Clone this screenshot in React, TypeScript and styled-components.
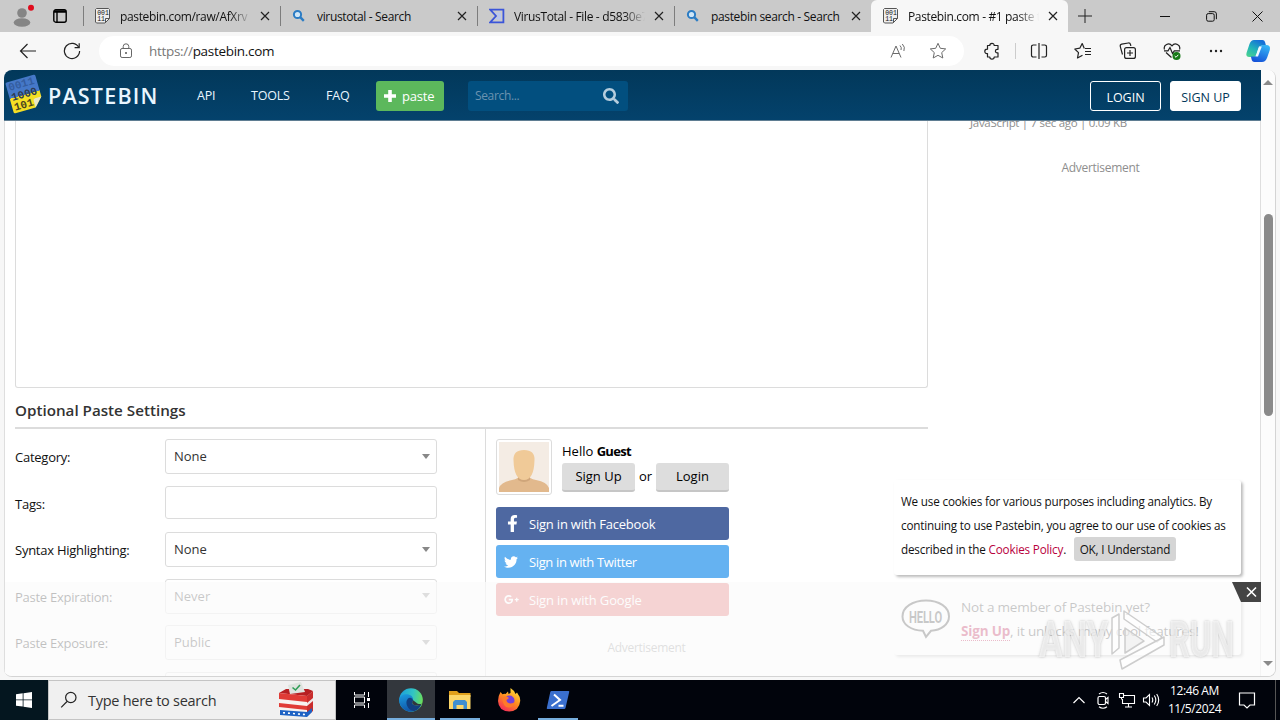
import React from 'react'
import styled, { createGlobalStyle, css } from 'styled-components'
import { FaSearch, FaFacebookF, FaTwitter, FaGooglePlusG } from 'react-icons/fa'

const font = `'Open Sans', 'Noto Sans', sans-serif`

const color = {
  tabBar: '#cacaca',
  toolbar: '#f7f7f7',
  border: '#dcdcdc',
  text: '#111',
  muted: '#8e8e8e',
  link: '#b8003c',
  green: '#5cb85c',
  facebook: '#4e68a1',
  twitter: '#65b2f1',
  google: '#e25b5b',
}

const tabs = [
  { icon: 'paste', title: 'pastebin.com/raw/AfXrv', fade: true },
  { icon: 'search', title: 'virustotal - Search' },
  { icon: 'virus', title: 'VirusTotal - File - d5830e7', fade: true },
  { icon: 'search', title: 'pastebin search - Search' },
  { icon: 'paste', title: 'Pastebin.com - #1 paste t', fade: true, active: true },
]

const fields = [
  { label: 'Category:', value: 'None', select: true },
  { label: 'Tags:', value: '' },
  { label: 'Syntax Highlighting:', value: 'None', select: true },
  { label: 'Paste Expiration:', value: 'Never', select: true },
  { label: 'Paste Exposure:', value: 'Public', select: true },
  { label: '', value: '' },
]

const Svg = ({ w = 16, h = w, box = `0 0 ${w} ${h}`, children }: any) => (
  <Icon width={w} height={h} viewBox={box}>
    {children}
  </Icon>
)

const TabIcon = ({ name }: { name: string }) => {
  if (name === 'search') {
    return (
      <Svg w={14}>
        <circle cx="5.5" cy="5.5" r="3.6" fill="#cfe6f7" stroke="#2b7cc4" strokeWidth="2" />
        <path d="M8.2 8.2l3.6 3.6" stroke="#2b7cc4" strokeWidth="2.4" />
      </Svg>
    )
  }
  if (name === 'virus') {
    return (
      <Svg w={16}>
        <path d="M1.2 1.7h13.2v12.6H1.2L7 8z" stroke="#3b55d9" strokeWidth="1.8" />
        <path d="M6 4.5h6v7H6L9.200 8z" fill="#b9c6ee" />
      </Svg>
    )
  }
  return (
    <Svg w={16}>
      <path d="M1.5.5h12l1 1v9l-4.500 4.500h-8.500l-1-1v-12.500z" fill="#eee" stroke="#555" />
      <path d="M14.500 10.500h-4V15" stroke="#555" />
      <g fontSize="6.500" fontFamily="Liberation Mono, monospace" fill="#111">
        <text x="2.200" y="6.800">001</text>
        <text x="2.200" y="13">11</text>
      </g>
    </Svg>
  )
}

const CloseIcon = () => (
  <Svg w={10}>
    <path d="M1 1l8 8M9 1L1 9" stroke="#222" strokeWidth="1.2" />
  </Svg>
)

const TabStrip = () => (
  <TabBar>
    <Profile>
      <Svg w={24} h={28}>
        <circle cx="12" cy="11" r="4.800" fill="#858585" />
        <ellipse cx="12" cy="20.500" rx="8.300" ry="4.300" fill="#858585" />
        <circle cx="21" cy="5.700" r="3" fill="#e00b1c" />
      </Svg>
      <Svg w={14}>
        <rect x="0.800" y="0.800" width="12.400" height="12.400" rx="2" stroke="#000" strokeWidth="1.400" />
        <path d="M1 2.500h12" stroke="#000" strokeWidth="2.500" />
        <path d="M4 3v10" stroke="#000" strokeWidth="1.400" />
      </Svg>
    </Profile>
    {tabs.map(tab => (
      <Tab key={tab.title} $active={tab.active}>
        <TabIconBox><TabIcon name={tab.icon} /></TabIconBox>
        <TabTitle $fade={tab.fade}>{tab.title}</TabTitle>
        <CloseIcon />
      </Tab>
    ))}
    <NewTab>
      <Svg w={14}><path d="M7 0v14M0 7h14" stroke="#222" /></Svg>
    </NewTab>
    <WindowButtons>
      <WindowButton><Svg w={10}><path d="M0 5.500h10" stroke="#111" /></Svg></WindowButton>
      <WindowButton>
        <Svg w={11}>
          <rect x="0.600" y="2.600" width="7.600" height="7.600" rx="1.600" stroke="#111" />
          <path d="M2.800 0.700h5.400a2.200 2.200 0 0 1 2.200 2.200v5.300" stroke="#111" />
        </Svg>
      </WindowButton>
      <WindowButton><Svg w={11}><path d="M0.500 0.500l10 10M10.500 0.500l-10 10" stroke="#111" /></Svg></WindowButton>
    </WindowButtons>
  </TabBar>
)

const AddressBar = () => (
  <Toolbar>
    <ToolCell $w={55}>
      <Svg w={18}><path d="M17 9H1.500M8.500 2L1.500 9l7 7" stroke="#222" strokeWidth="1.200" /></Svg>
    </ToolCell>
    <ToolCell $w={33}>
      <Svg w={18}>
        <path d="M15.800 5.500A7.600 7.600 0 1 0 16.600 9" stroke="#222" strokeWidth="1.200" />
        <path d="M16.200 1.200v4.500h-4.600" stroke="#222" strokeWidth="1.200" />
      </Svg>
    </ToolCell>
    <Address>
      <Svg w={14} h={16}>
        <rect x="1.500" y="5.500" width="11" height="9" rx="1.600" stroke="#666" />
        <path d="M4.200 5.500V3.600a2.800 2.800 0 0 1 5.600 0v1.900" stroke="#666" />
        <circle cx="7" cy="10" r="1" fill="#555" />
      </Svg>
      <Url><span>https://</span>pastebin.com</Url>
      <Svg w={17} h={16}>
        <path d="M1 14.500L6 3l5 11.500M2.800 10.500h6.400M10 2.500q2 2 1 4.500M12.300 1q3.200 3 1.600 7" stroke="#6b6b6b" />
      </Svg>
      <Svg w={18}>
        <path d="M9 1.300l2.300 5 5.400.6-4 3.700 1.100 5.400L9 13.300 4.200 16l1.100-5.400-4-3.700 5.400-.6z" stroke="#6b6b6b" strokeLinejoin="round" />
      </Svg>
    </Address>
    <ToolCell $w={50} $shift={5}>
      <Svg w={18}>
        <path d="M4.500 3.500h2.300a2.200 2.200 0 0 1 4.400 0h3.800v3.800h-.8a1.800 1.800 0 1 0 0 3.600h.8v4.100h-3.800a2.200 2.200 0 0 1-4.400 0H4.500v-3.400H4a2.200 2.200 0 0 1 0-4.400h.5z" stroke="#222" strokeWidth="1.200" strokeLinejoin="round" />
      </Svg>
    </ToolCell>
    <ToolDivider />
    <ToolCell>
      <Svg w={18}>
        <path d="M6.500 3H3.200a1.700 1.700 0 0 0-1.700 1.700v8.600A1.700 1.700 0 0 0 3.200 15h3.300M11.500 3h3.300a1.700 1.700 0 0 1 1.700 1.700v8.600a1.700 1.700 0 0 1-1.700 1.700h-3.300M9 1v16" stroke="#222" strokeWidth="1.200" />
      </Svg>
    </ToolCell>
    <ToolCell>
      <Svg w={18}>
        <path d="M10.300 6.500L8.200 1.500 5.800 6.200.8 7l3.700 3.600L3.500 16l5-2.800M11 6.500h6M11 9.500h6M11 12.500h6" stroke="#222" strokeWidth="1.200" strokeLinejoin="round" />
      </Svg>
    </ToolCell>
    <ToolCell>
      <Svg w={18}>
        <path d="M3.500 12.500L1.300 4.600A2 2 0 0 1 2.700 2.200L9.300 1a2 2 0 0 1 2.200 1.500l.3 1.500" stroke="#222" strokeWidth="1.200" />
        <rect x="5.600" y="5.600" width="10.800" height="10.800" rx="2" stroke="#222" strokeWidth="1.200" />
        <path d="M11 8v6M8 11h6" stroke="#222" strokeWidth="1.200" />
      </Svg>
    </ToolCell>
    <ToolCell>
      <Svg w={18}>
        <path d="M1.500 7.500C0 3 6 0 9 3.800 12 0 18 3 16.500 7.500M3 10.500l5.500 5M1 8.800h4L7 5.500l2.500 6 1.800-2.700H17" stroke="#222" strokeWidth="1.200" />
        <circle cx="13.500" cy="14" r="4" fill="#177a17" />
        <path d="M11.700 14l1.300 1.300 2.300-2.500" stroke="#fff" />
      </Svg>
    </ToolCell>
    <ToolCell>
      <Svg w={16}>
        <g fill="#222"><circle cx="3" cy="8" r="1.200" /><circle cx="8" cy="8" r="1.200" /><circle cx="13" cy="8" r="1.200" /></g>
      </Svg>
    </ToolCell>
    <ToolCell $w={39}>
      <Svg w={26} h={24}>
        <defs>
          <linearGradient id="copilotLeft" x1="0" y1="1" x2="0.600" y2="0">
            <stop offset="0" stopColor="#4fd58a" />
            <stop offset="0.500" stopColor="#22b5b8" />
            <stop offset="1" stopColor="#1670d8" />
          </linearGradient>
          <linearGradient id="copilotRight" x1="0.300" y1="1" x2="0.700" y2="0">
            <stop offset="0" stopColor="#1552d8" />
            <stop offset="1" stopColor="#35b5f5" />
          </linearGradient>
        </defs>
        <path d="M9 1h8.500q2 0 2.500 2l1 3.500h-3.500q-3 0-4 3l-2 6q-.8 2.500-3.500 2.500H4.500Q.5 18 1.500 14L4.500 5Q6 1 9 1z" fill="url(#copilotLeft)" />
        <path d="M17 23H9.500q-2.500 0-3-3l-.6-2.500h3q2.600 0 3.500-2.500l2-6q1-3 3.800-3H21q5 0 3.800 5l-2.600 7.500Q20.500 23 17 23z" fill="url(#copilotRight)" />
        <path d="M14 7.500h2.800l-3.800 10h-2.500z" fill="#eef8ff" />
      </Svg>
    </ToolCell>
  </Toolbar>
)

const PastebinLogo = () => (
  <Svg w={42} h={46}>
    <defs>
      <linearGradient id="note" x1="0" y1="0" x2="0" y2="1">
        <stop offset="0.520" stopColor="#4578c8" />
        <stop offset="0.520" stopColor="#f5df24" />
      </linearGradient>
    </defs>
    <g transform="translate(-0.500 -2) rotate(-16 20 23)">
      <path d="M6 7h28q1.500 0 1.500 1.500V30L27 39H6q-1.500 0-1.500-1.500v-29Q4.500 7 6 7z" fill="url(#note)" />
      <path d="M35.500 30H29q-2 0-2 2V39z" fill="#e8e6c5" />
      <g fontFamily="Liberation Mono, monospace" fontWeight="700" fontSize="11">
        <text x="6.500" y="16" fill="#345d9f">0011</text>
        <text x="6.500" y="26.500" fill="#2e3b50">1000</text>
        <text x="6.500" y="36.500" fill="#4a4520">101</text>
      </g>
    </g>
  </Svg>
)

const SiteHeader = () => (
  <Header>
    <PastebinLogo />
    <Brand>PASTEBIN</Brand>
    <NavLink $w={54}>API</NavLink>
    <NavLink $w={75}>TOOLS</NavLink>
    <NavLink $w={50}>FAQ</NavLink>
    <PasteButton>
      <Svg w={14}><path d="M7 1v12M1 7h12" stroke="#fff" strokeWidth="3.600" /></Svg>
      paste
    </PasteButton>
    <SearchBox>Search...<FaSearch size={16} /></SearchBox>
    <Spacer />
    <LoginButton>LOGIN</LoginButton>
    <LoginButton $filled>SIGN UP</LoginButton>
  </Header>
)

const Avatar = () => (
  <AvatarFrame>
    <Svg w={50} h={50}>
      <rect width="50" height="50" fill="#f4ece4" />
      <path d="M0 50v-4q2-6 13-8 7-1.500 7-4h10q0 2.500 7 4 11 2 13 8v4z" fill="#e2b98d" />
      <path d="M19 33h12v5q-6 4-12 0z" fill="#cfa57a" />
      <path d="M14.500 18Q14 8 25 8t10.500 10Q35 38 25 38T14.500 18z" fill="#f0ca98" />
    </Svg>
  </AvatarFrame>
)

const PasteSettings = () => (
  <Settings>
    <Fields>
      {fields.map(f => (
        <Field key={f.label}>
          <FieldLabel>{f.label}</FieldLabel>
          <FieldBox $select={f.select}>{f.value}{f.select && <Caret />}</FieldBox>
        </Field>
      ))}
    </Fields>
    <Account>
      <Guest>
        <Avatar />
        <div>
          <Hello>Hello <b>Guest</b></Hello>
          <GuestButtons>
            <GreyButton>Sign Up</GreyButton>or<GreyButton>Login</GreyButton>
          </GuestButtons>
        </div>
      </Guest>
      <Social $bg={color.facebook} $spacing={-0.2}><i><FaFacebookF size={17} /></i>Sign in with Facebook</Social>
      <Social $bg={color.twitter} $spacing={-0.37}><i><FaTwitter size={14} /></i>Sign in with Twitter</Social>
      <Social $bg={color.google} $spacing={-0.15}><i><FaGooglePlusG size={15} /></i>Sign in with Google</Social>
      <AdLabel>Advertisement</AdLabel>
    </Account>
  </Settings>
)

const Watermark = () => (
  <Mark>
    <MarkText $w={72} $scale={0.7}>ANY</MarkText>
    <Svg w={58} h={64}>
      <g stroke="#cdcdcd" strokeWidth="1.500" fill="#fff" fillOpacity="0.600" strokeLinejoin="round">
        <path d="M1 10l7-4v34l-7 6z" />
        <path d="M13 3l38 26-5 5-33-23z" />
        <path d="M9 52l44-23v8L11 61z" />
        <path d="M14 20l19 13-19 12z" fill="#ececec" />
      </g>
    </Svg>
    <MarkText $w={64} $scale={0.65}>RUN</MarkText>
  </Mark>
)

const Notices = () => (
  <>
    <CookieCard>
      <p>We use cookies for various purposes including analytics. By</p>
      <p>continuing to use Pastebin, you agree to our use of cookies as</p>
      <p>described in the <a>Cookies Policy</a>. <CookieButton>OK, I Understand</CookieButton></p>
    </CookieCard>
    <HelloCard>
      <Svg w={50} h={40}>
        <path d="M25 1.500c13 0 23 6.500 23 16 0 8-8 13.500-18 14.300L25 38l-3-6.200C10 31.500 1.500 25.500 1.500 17.500 1.500 8 12 1.500 25 1.500z" stroke="#333" strokeWidth="2" />
        <text x="8" y="23.500" textLength="33" lengthAdjust="spacingAndGlyphs" fontFamily="Roboto, sans-serif" fontWeight="700" fontSize="17" fill="#333">HELLO</text>
      </Svg>
      <div>
        <p>Not a member of Pastebin yet?</p>
        <p><a>Sign Up</a>, it unlocks many cool features!</p>
      </div>
    </HelloCard>
    <AdOverlay />
    <AdClose>
      <Svg w={29} h={20}>
        <path d="M0 0h29v20H9z" fill="#444" />
        <path d="M15 5.500l9 9M24 5.500l-9 9" stroke="#fff" strokeWidth="1.600" />
      </Svg>
    </AdClose>
    <Watermark />
  </>
)

const Taskbar = () => (
  <Bar>
    <Start>
      <Svg w={16}>
        <path d="M0 2.200l6.700-.9v6.200H0zM7.500 1.200L16 0v7.500H7.500zM0 8.300h6.700v6.300L0 13.700zM7.500 8.300H16V16l-8.500-1.200z" fill="#fff" />
      </Svg>
    </Start>
    <TaskSearch>
      <Svg w={18}>
        <circle cx="10.800" cy="6.500" r="5.200" stroke="#222" strokeWidth="1.200" />
        <path d="M7 10.500L1.200 16.300" stroke="#222" strokeWidth="1.200" />
      </Svg>
      <span>Type here to search</span>
      <Svg w={36} h={38}>
        <path d="M1 12l7-4h22l5 2-7 6H1z" fill="#b71f22" />
        <path d="M10 4l13-3 4 10-15 2z" fill="#dfe3df" />
        <path d="M14.500 6.500l3 2.500L22 4" stroke="#2f9e57" strokeWidth="1.600" />
        <path d="M1 12l28 3v20l-28-3z" fill="#f7f2f0" />
        <path d="M1 12l28 3v6L1 18zM1 22l28 3v4L1 26z" fill="#e03b36" />
        <path d="M29 15l6-5v20l-6 5z" fill="#c92d2d" />
        <path d="M29 22l6-5v3l-6 5z" fill="#f0e6e6" />
        <path d="M2 29l27 2v5L2 34zM29 31l5-4v4l-5 5z" fill="#1d62c4" />
        <path d="M5 31.700l22 1.800" stroke="#fff" strokeWidth="1.600" strokeDasharray="2 3" />
      </Svg>
    </TaskSearch>
    <Task $w={51}>
      <Svg w={18}>
        <path d="M1.500 1v3h10V1M1.500 17v-3h10v3M1.500 6h10v6h-10zM15.500 1v5M15.500 12v5" stroke="#fff" />
        <path d="M14 7h3v3h-3z" fill="#fff" />
      </Svg>
    </Task>
    <Task $w={48} $open $active>
      <Svg w={24}>
        <defs>
          <linearGradient id="edgeTop" x1="0" y1="0.300" x2="1" y2="0.500">
            <stop offset="0" stopColor="#1ba0dc" />
            <stop offset="0.550" stopColor="#32c4c4" />
            <stop offset="1" stopColor="#6be05a" />
          </linearGradient>
          <linearGradient id="edgeBody" x1="0" y1="0" x2="0.300" y2="1">
            <stop offset="0" stopColor="#1b9de0" />
            <stop offset="1" stopColor="#1155a8" />
          </linearGradient>
        </defs>
        <circle cx="12" cy="12" r="11.800" fill="url(#edgeTop)" />
        <path d="M.2 12C.5 7 6 5.500 9.500 6.500c4 1 5 4 4.500 6-.6 2-1.500 2-1 3 1.500 2.800 6.500 2.500 9.200.8C20.300 21 16.500 23.800 12 23.800 5.500 23.800.2 18.500.2 12z" fill="url(#edgeBody)" />
        <path d="M9 10.500c-4 4 0 12 6 12.500 3-.7 5.500-3 7.200-6.600-2.700 1.700-7.700 2-9.200-.8-.5-1 .6-2 1-3.200C13.500 10 11 9 9 10.500z" fill="#123f80" />
        <path d="M13.800 12c.3 1-1.200 2.400-.5 3.600 1.500 2.800 6.500 2.300 8.900.8l1-1c-2 1-4.500.5-5.500-.4z" fill="#32363c" />
      </Svg>
    </Task>
    <Task $w={50} $open>
      <Svg w={22} h={20}>
        <path d="M0 1h8l2 2h11.500v4H0z" fill="#e0a01c" />
        <path d="M0 5h21.500v14H0z" fill="#fbd669" />
        <path d="M4 19v-7l2-2h10l2 2v7h-3.500v-4h-7v4z" fill="#3f8fcf" />
      </Svg>
    </Task>
    <Task $w={48}>
      <Svg w={24}>
        <defs>
          <linearGradient id="fox" x1="0.800" y1="0" x2="0.200" y2="1">
            <stop offset="0" stopColor="#ffe43a" />
            <stop offset="0.500" stopColor="#ff8a1f" />
            <stop offset="1" stopColor="#f5245f" />
          </linearGradient>
        </defs>
        <path d="M3.500 4l2 2.200q1.500-.6 3-.3L11 3.500 11.500 6l2-1L13.500 0q4 2.500 5 6l1.500-1.500Q23.500 9 23.200 13q-.8 10-11 10.500Q1.500 23 1 13q0-5 2.500-9z" fill="url(#fox)" />
        <circle cx="12.500" cy="12.500" r="5" fill="#7540d9" />
        <path d="M5 9.500q4-2 7 .5l-2.500 2q0 3 4 3.500 3 0 4.500-2-1 6-6.500 6T5 9.500z" fill="#ff7a2a" />
      </Svg>
    </Task>
    <Task $w={50} $open>
      <Svg w={24} h={20}>
        <path d="M5.500 1h17q1 0 .7 1l-3.700 16q-.3 1-1.300 1H1.500q-1 0-.7-1L4.300 2q.2-1 1.200-1z" fill="#3a6fce" />
        <path d="M8 4.500l6 5.500-8.500 6M12.500 15.800h5" stroke="#fff" strokeWidth="2" />
      </Svg>
    </Task>
    <Spacer />
    <TrayIcon>
      <Svg w={14}><path d="M1.500 10L7 4.500 12.500 10" stroke="#fff" strokeWidth="1.200" /></Svg>
    </TrayIcon>
    <TrayIcon>
      <Svg w={14} h={18}>
        <rect x="2" y="5.500" width="7.500" height="8" rx="1.500" stroke="#fff" strokeWidth="1.200" />
        <path d="M9.500 8.500l2.500-2v6l-2.500-2M3 3q4-3 8 0M3 15.800q4 3 8 0" stroke="#fff" strokeWidth="1.100" />
      </Svg>
    </TrayIcon>
    <TrayIcon>
      <Svg w={18}>
        <path d="M6 4.500h10.500v8H4.500V8M10.500 12.500V16M7 16h7M1.500 2.500h4v4h-4zM3.500 6.500v2" stroke="#fff" strokeWidth="1.100" />
      </Svg>
    </TrayIcon>
    <TrayIcon>
      <Svg w={18}>
        <path d="M1.500 7H4l3.500-3.500v11L4 11H1.500zM10 6.500q1.500 2.500 0 5M12.300 4.500q3 4.500 0 9M14.700 3q4 6 0 12" stroke="#fff" strokeWidth="1.100" />
      </Svg>
    </TrayIcon>
    <Clock><span>12:46 AM</span><span>11/5/2024</span></Clock>
    <Notify>
      <Svg w={18}><path d="M1.500 2h15v12h-4.500L9 17l-3-3H1.500z" stroke="#fff" strokeWidth="1.200" /></Svg>
    </Notify>
  </Bar>
)

const App = () => (
  <Desktop>
    <GlobalStyle />
    <TabStrip />
    <AddressBar />
    <Viewport>
      <Page>
        <SiteHeader />
        <Columns>
          <Main>
            <PasteArea />
            <SectionTitle>Optional Paste Settings</SectionTitle>
            <PasteSettings />
          </Main>
          <Sidebar>
            <PasteMeta>JavaScript | 7 sec ago | 0.09 KB</PasteMeta>
            <AdLabel $side>Advertisement</AdLabel>
          </Sidebar>
        </Columns>
        <Notices />
      </Page>
      <Scrollbar>
        <Arrow $up />
        <Thumb />
        <Arrow />
      </Scrollbar>
    </Viewport>
    <Taskbar />
  </Desktop>
)

export default App

const GlobalStyle = createGlobalStyle`
  * {
    box-sizing: border-box;
  }
  body {
    margin: 0;
    overflow: hidden;
    font-family: ${font};
  }
  p {
    margin: 0;
  }
`

const Icon = styled.svg`
  display: block;
  flex: none;
  fill: none;
`

const Desktop = styled.div`
  width: 1280px;
  height: 720px;
  display: flex;
  flex-direction: column;
  background: ${color.toolbar};
`

const Spacer = styled.div`
  flex: 1;
`

const TabBar = styled.div`
  height: 32px;
  flex: none;
  display: flex;
  background: ${color.tabBar};
`

const Profile = styled.div`
  width: 83px;
  padding: 0 0 0 10px;
  display: flex;
  align-items: center;
  gap: 19px;
`

const Tab = styled.div<{ $active?: boolean }>`
  width: 197px;
  padding: 0 10px 0 12px;
  display: flex;
  align-items: center;
  ${p => p.$active ? css`
    background: ${color.toolbar};
    border-radius: 6px 6px 0 0;
  ` : css`
    background: linear-gradient(#7d7d7d, #7d7d7d) 0 6px / 1px 20px no-repeat;
  `}
`

const TabIconBox = styled.div`
  width: 25px;
  flex: none;
  display: flex;
`

const TabTitle = styled.div<{ $fade?: boolean }>`
  width: 131px;
  margin-right: auto;
  overflow: hidden;
  white-space: nowrap;
  font-size: 12px;
  letter-spacing: -0.35px;
  color: #111;
  ${p => p.$fade && css`
    mask-image: linear-gradient(to right, #000 84%, transparent);
  `}
`

const NewTab = styled.div`
  width: 34px;
  display: flex;
  align-items: center;
  justify-content: center;
`

const WindowButtons = styled.div`
  margin-left: auto;
  display: flex;
`

const WindowButton = styled.div`
  width: 46px;
  display: flex;
  align-items: center;
  justify-content: center;
`

const Toolbar = styled.div`
  height: 38px;
  flex: none;
  display: flex;
  align-items: center;
`

const ToolCell = styled.div<{ $w?: number; $shift?: number }>`
  width: ${p => p.$w || 44.3}px;
  padding-left: ${p => p.$shift || 0}px;
  display: flex;
  justify-content: center;
`

const ToolDivider = styled.div`
  width: 1px;
  height: 16px;
  margin: 0 1px;
  background: #ccc;
`

const Address = styled.div`
  width: 865px;
  height: 30px;
  margin-left: 11px;
  padding: 0 17px 0 20px;
  display: flex;
  align-items: center;
  border-radius: 15px;
  background: #fff;
`

const Url = styled.div`
  flex: 1;
  margin-left: 16px;
  font-size: 13.5px;
  letter-spacing: -0.3px;
  color: #111;
  & span {
    color: #777;
  }
  & + svg {
    margin-right: 22px;
  }
`

const Viewport = styled.div`
  width: 1272px;
  height: 607px;
  flex: none;
  margin: 0 4px 3px;
  display: flex;
  overflow: hidden;
  border: 1px solid #d4d4d4;
  border-width: 0 1px 1px 0;
  border-radius: 8px;
  background: #fff;
`

const Page = styled.div`
  position: relative;
  width: 1257px;
  height: 606px;
  overflow: hidden;
`

const Header = styled.header`
  position: relative;
  z-index: 1;
  height: 51px;
  padding: 2px 20px 0 1px;
  display: flex;
  align-items: center;
  background: linear-gradient(#02385a, #04426c);
  border-bottom: 1px solid #5f7d92;
  color: #e9f6ff;
`

const Brand = styled.div`
  width: 150px;
  padding: 0 0 1px 1px;
  font-size: 21.5px;
  font-weight: 600;
  letter-spacing: 1.2px;
`

const NavLink = styled.a<{ $w: number }>`
  width: ${p => p.$w}px;
  padding-bottom: 1px;
  font-size: 12.5px;
  letter-spacing: -0.2px;
`

const PasteButton = styled.div`
  width: 68px;
  height: 30px;
  margin-right: 24px;
  padding: 0 0 1px 7px;
  display: flex;
  align-items: center;
  gap: 5px;
  border-radius: 3px;
  background: ${color.green};
  color: #fff;
  font-size: 13px;
  letter-spacing: -0.2px;
`

const SearchBox = styled.div`
  width: 160px;
  height: 30px;
  padding: 0 9px 1px 7px;
  display: flex;
  align-items: center;
  justify-content: space-between;
  border-radius: 3px;
  background: #024f7f;
  color: #6b93b0;
  font-size: 12px;
  letter-spacing: -0.35px;
  & svg {
    color: #b5cddd;
  }
`

const LoginButton = styled.div<{ $filled?: boolean }>`
  width: 71px;
  height: 30px;
  margin-left: ${p => (p.$filled ? 9 : 0)}px;
  padding-top: 2px;
  display: flex;
  align-items: center;
  justify-content: center;
  border: 1px solid #fff;
  border-radius: 3px;
  background: ${p => (p.$filled ? '#fff' : 'transparent')};
  color: ${p => (p.$filled ? '#023859' : '#fff')};
  font-size: 12.5px;
`

const Columns = styled.div`
  height: 556px;
  display: flex;
  border: 1px solid #dedede;
  border-width: 0 1px;
`

const Main = styled.main`
  width: 913px;
  margin-left: 10px;
`

const PasteArea = styled.div`
  height: 267px;
  border: 1px solid ${color.border};
  border-top: 0;
  border-radius: 0 0 3px 3px;
`

const SectionTitle = styled.h2`
  height: 41px;
  margin: 0;
  padding-top: 11px;
  border-bottom: 2px solid ${color.border};
  font-size: 15.2px;
  font-weight: 600;
  line-height: 22px;
  color: #333;
`

const Settings = styled.div`
  display: flex;
`

const Fields = styled.div`
  width: 470px;
  padding-top: 10px;
`

const Field = styled.div`
  height: 46.6px;
  display: flex;
  align-items: flex-start;
`

const FieldLabel = styled.label`
  width: 150px;
  font-size: 13px;
  line-height: 36px;
  letter-spacing: -0.25px;
  color: ${color.text};
`

const FieldBox = styled.div<{ $select?: boolean }>`
  width: 272px;
  height: ${p => (p.$select ? 35 : 33)}px;
  padding: 0 6px 1px 8px;
  display: flex;
  align-items: center;
  justify-content: space-between;
  border: 1px solid ${color.border};
  border-radius: 3px;
  font-size: 13px;
  color: #333;
`

const Caret = styled.i`
  border: 4.5px solid transparent;
  border-top: 5px solid #888;
  border-bottom: 0;
`

const Account = styled.div`
  width: 443px;
  height: 260px;
  padding: 10px 0 0 10px;
  border-left: 1px solid ${color.border};
  font-size: 13px;
  color: #000;
`

const Guest = styled.div`
  height: 68px;
  display: flex;
  gap: 10px;
`

const AvatarFrame = styled.div`
  width: 56px;
  height: 56px;
  padding: 2px;
  border: 1px solid ${color.border};
  border-radius: 3px;
`

const Hello = styled.div`
  height: 24px;
  line-height: 25px;
  & b {
    letter-spacing: -0.7px;
  }
`

const GuestButtons = styled.div`
  width: 167px;
  display: flex;
  justify-content: space-between;
  line-height: 27px;
`

const GreyButton = styled.div`
  width: 73px;
  height: 29px;
  text-align: center;
  border-radius: 3px;
  border-bottom: 2px solid #c6c6c6;
  background: #ddd;
`

const Social = styled.div<{ $bg: string; $spacing: number }>`
  width: 233px;
  height: 33px;
  margin-bottom: 5px;
  display: flex;
  align-items: center;
  border-radius: 3px;
  background: ${p => p.$bg};
  color: #fff;
  letter-spacing: ${p => p.$spacing}px;
  & i {
    width: 33px;
    padding-left: 8px;
    display: flex;
  }
`

const AdLabel = styled.div<{ $side?: boolean }>`
  text-align: center;
  font-size: 12px;
  letter-spacing: -0.3px;
  color: ${color.muted};
  ${p => p.$side ? css`
    width: 261px;
    margin-top: 29px;
  ` : css`
    width: 301px;
    margin-top: 23px;
  `}
`

const Sidebar = styled.aside`
  margin: -6px 0 0 42px;
`

const PasteMeta = styled.div`
  font-size: 11.5px;
  letter-spacing: -0.3px;
  color: ${color.muted};
`

const CookieCard = styled.div`
  position: absolute;
  left: 890px;
  bottom: 101px;
  width: 347px;
  height: 95px;
  padding: 9px 7px;
  background: #fff;
  border-radius: 3px;
  box-shadow: 2px 2px 3px #bbb;
  font-size: 11.7px;
  line-height: 24px;
  letter-spacing: -0.18px;
  white-space: nowrap;
  color: ${color.text};
  & a {
    color: ${color.link};
  }
`

const CookieButton = styled.span`
  display: inline-block;
  width: 102px;
  height: 24px;
  margin-left: 5px;
  text-align: center;
  border-radius: 3px;
  background: #d5d5d5;
`

const HelloCard = styled.div`
  position: absolute;
  left: 890px;
  bottom: 21px;
  width: 347px;
  height: 70px;
  padding: 10px 7px 8px;
  display: flex;
  gap: 10px;
  background: #fff;
  border-radius: 3px;
  box-shadow: 2px 2px 3px #bbb;
  font-size: 13.5px;
  line-height: 24px;
  letter-spacing: -0.18px;
  white-space: nowrap;
  color: #333;
  & svg {
    margin-top: 4px;
  }
  & a {
    color: ${color.link};
    font-weight: 700;
    border-bottom: 1px dotted ${color.link};
  }
`

const AdOverlay = styled.div`
  position: absolute;
  left: 1px;
  right: 0;
  bottom: 0;
  height: 94px;
  background: rgba(251, 251, 251, 0.75);
`

const AdClose = styled.div`
  position: absolute;
  right: 0;
  bottom: 74px;
`

const Mark = styled.div`
  position: absolute;
  right: 28px;
  bottom: 4px;
  display: flex;
  align-items: center;
`

const MarkText = styled.div<{ $w: number; $scale: number }>`
  width: ${p => p.$w}px;
  font-family: Roboto, sans-serif;
  font-size: 50px;
  font-weight: 700;
  line-height: 64px;
  transform: scaleX(${p => p.$scale});
  transform-origin: left;
  color: rgba(255, 255, 255, 0.65);
  text-shadow: 0 0 3px rgba(120, 120, 120, 0.45);
`

const Scrollbar = styled.div`
  width: 14px;
  display: flex;
  flex-direction: column;
  align-items: center;
  padding: 10px 0;
  background: #fcfcfc;
`

const Arrow = styled.i<{ $up?: boolean }>`
  border: 5px solid transparent;
  ${p => p.$up ? css`
    border-bottom: 5px solid #8a8a8a;
    border-top: 0;
  ` : css`
    border-top: 5px solid #8a8a8a;
    border-bottom: 0;
    margin-top: auto;
  `}
`

const Thumb = styled.div`
  width: 9px;
  height: 202px;
  margin-top: 129px;
  border-radius: 5px;
  background: #8a8a8a;
`

const Bar = styled.div`
  height: 40px;
  flex: none;
  display: flex;
  background: #01040c;
  color: #fff;
`

const Start = styled.div`
  width: 48px;
  display: flex;
  align-items: center;
  justify-content: center;
  background: #04161f;
`

const TaskSearch = styled.div`
  width: 288px;
  padding: 0 21px 0 11px;
  display: flex;
  align-items: center;
  background: #f0f0f0;
  border: 1px solid #c4c4c4;
  font-size: 14.5px;
  letter-spacing: -0.27px;
  color: #333;
  & span {
    flex: 1;
    margin-left: 10px;
    white-space: nowrap;
  }
`

const Task = styled.div<{ $w: number; $open?: boolean; $active?: boolean }>`
  width: ${p => p.$w}px;
  display: flex;
  align-items: center;
  justify-content: center;
  background: ${p => (p.$active ? '#33373d' : 'transparent')};
  position: relative;
  ${p => p.$open && css`
    &::after {
      content: '';
      position: absolute;
      bottom: 0;
      height: 2px;
      width: ${p.$active ? '48px' : '40px'};
      background: #76aede;
    }
  `}
`

const TrayIcon = styled.div`
  width: 24px;
  display: flex;
  align-items: center;
  justify-content: center;
`

const Clock = styled.div`
  width: 63px;
  display: flex;
  flex-direction: column;
  align-items: center;
  padding: 2px 0 0;
  font-size: 12px;
  line-height: 18px;
  letter-spacing: -0.4px;
`

const Notify = styled.div`
  width: 50px;
  margin-right: 4px;
  padding-right: 7px;
  display: flex;
  align-items: center;
  justify-content: center;
  border-right: 1px solid #555;
`
